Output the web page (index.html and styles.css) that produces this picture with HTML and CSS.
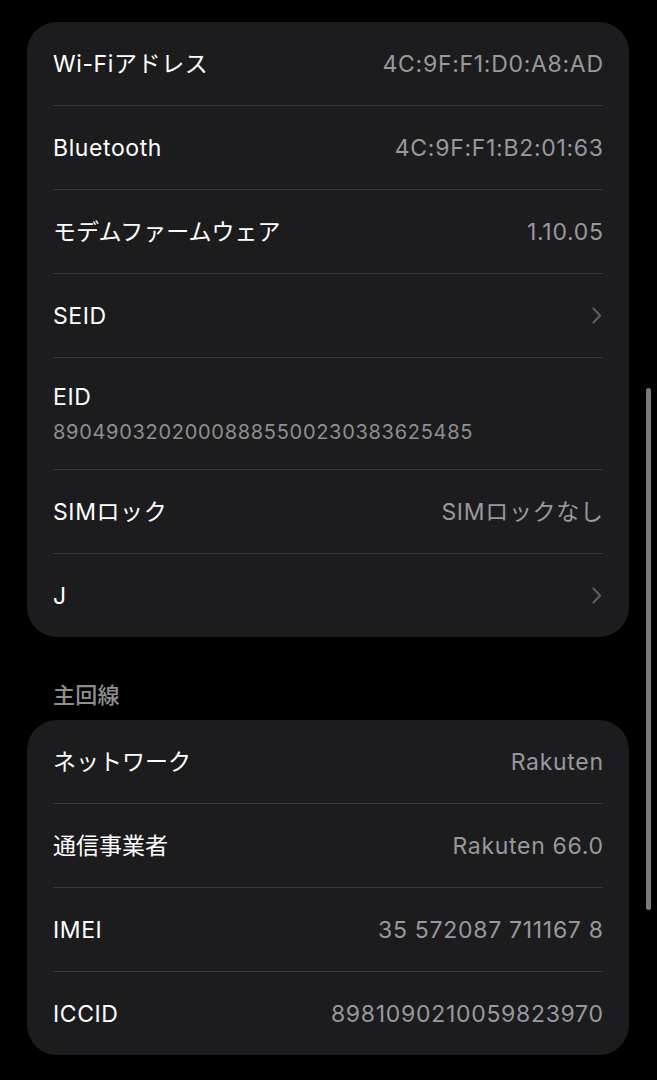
FILE: index.html
```html
<!DOCTYPE html>
<html lang="ja">
<head>
<meta charset="utf-8">
<link rel="stylesheet" href="styles.css">
</head>
<body>
<div class="page">
  <div class="card first">
    <div class="row"><span class="label">Wi-Fiアドレス</span><span class="value">4C:9F:F1:D0:A8:AD</span></div>
    <div class="row"><span class="label">Bluetooth</span><span class="value">4C:9F:F1:B2:01:63</span></div>
    <div class="row"><span class="label ja">モデムファームウェア</span><span class="value">1.10.05</span></div>
    <div class="row"><span class="label">SEID</span><svg class="chev" width="10" height="17" viewBox="0 0 10 17"><path d="M1.5 1.5 L8 8.5 L1.5 15.5" fill="none" stroke="#5b5b60" stroke-width="2.2" stroke-linecap="round" stroke-linejoin="round"/></svg></div>
    <div class="row tall"><span class="label">EID</span><span class="sub">89049032020008885500230383625485</span></div>
    <div class="row"><span class="label">SIMロック</span><span class="value">SIMロックなし</span></div>
    <div class="row"><span class="label">J</span><svg class="chev" width="10" height="17" viewBox="0 0 10 17"><path d="M1.5 1.5 L8 8.5 L1.5 15.5" fill="none" stroke="#5b5b60" stroke-width="2.2" stroke-linecap="round" stroke-linejoin="round"/></svg></div>
  </div>
  <div class="header">主回線</div>
  <div class="card">
    <div class="row"><span class="label ja">ネットワーク</span><span class="value">Rakuten</span></div>
    <div class="row"><span class="label ja">通信事業者</span><span class="value">Rakuten 66.0</span></div>
    <div class="row"><span class="label">IMEI</span><span class="value">35 572087 711167 8</span></div>
    <div class="row"><span class="label">ICCID</span><span class="value">8981090210059823970</span></div>
  </div>
  <div class="scrollbar"></div>
</div>
</body>
</html>
```
FILE: styles.css
```css
html, body {
  margin: 0;
  padding: 0;
  background: #000;
}
body {
  font-family: Inter, "Noto Sans CJK JP", sans-serif;
  color: #fff;
}
.page {
  position: relative;
  width: 657px;
  height: 1080px;
  overflow: hidden;
}
.card {
  margin-left: 27px;
  width: 602px;
  background: #1c1c1e;
  border-radius: 30px;
}
.card.first {
  margin-top: 22px;
}
.row {
  margin: 0 26px;
  height: 83px;
  border-bottom: 1px solid #38383a;
  display: flex;
  align-items: center;
  justify-content: space-between;
}
.row:last-child {
  border-bottom: none;
}
.row.tall {
  height: 111px;
  flex-direction: column;
  align-items: flex-start;
  justify-content: center;
  gap: 9px;
}
.label {
  font-size: 23px;
  line-height: 28px;
  letter-spacing: 0.6px;
}
.label.ja {
  letter-spacing: 0;
}
.value {
  font-size: 23px;
  line-height: 28px;
  color: #98989e;
  letter-spacing: 0.7px;
  margin-right: -0.7px;
}
.sub {
  font-size: 20px;
  line-height: 24px;
  color: #8e8e93;
  letter-spacing: 0.7px;
}
.chev {
  margin-right: 1px;
}
.header {
  padding: 45px 0 12px 53px;
  font-size: 22px;
  line-height: 26px;
  font-weight: 500;
  letter-spacing: 0.3px;
  color: #8e8e93;
}
.scrollbar {
  position: absolute;
  left: 646px;
  top: 388px;
  width: 5px;
  height: 522px;
  border-radius: 3px;
  background: #7b7b7e;
}
```
